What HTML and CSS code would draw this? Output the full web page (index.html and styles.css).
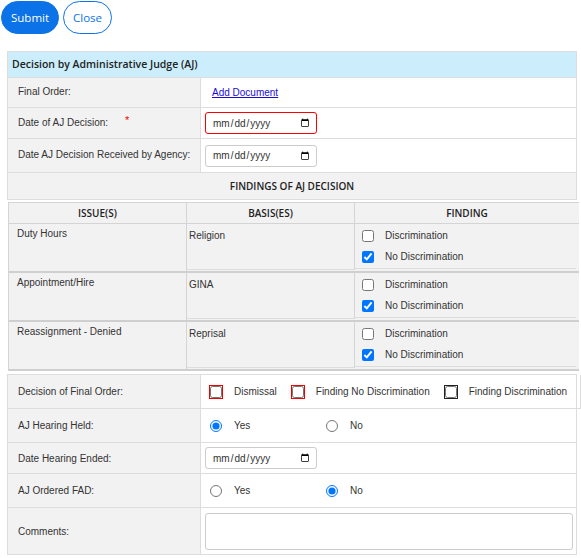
FILE: index.html
```html
<!DOCTYPE html>
<html lang="en">
<head>
  <meta charset="UTF-8">
  <meta name="viewport" content="width=device-width, initial-scale=1.0">
  <title>AJ Decision</title>
  <link rel="stylesheet" href="styles.css">
</head>
<body>

  <div class="toolbar">
    <button class="btn btn-primary">Submit</button>
    <button class="btn btn-outline">Close</button>
  </div>

  <div class="panel">
    <div class="panel-title">Decision by Administrative Judge (AJ)</div>

    <div class="form-row row-final">
      <div class="label">Final Order:</div>
      <div class="value"><a href="#" class="doc-link">Add Document</a></div>
    </div>
    <div class="form-row row-date">
      <div class="label">Date of AJ Decision: <span class="required">*</span></div>
      <div class="value"><input type="date" class="date-input invalid"></div>
    </div>
    <div class="form-row row-received">
      <div class="label">Date AJ Decision Received by Agency:</div>
      <div class="value"><input type="date" class="date-input"></div>
    </div>

    <div class="subhead">FINDINGS OF AJ DECISION</div>
  </div>

  <div class="findings">
    <div class="findings-head">
      <div>ISSUE(S)</div>
      <div>BASIS(ES)</div>
      <div>FINDING</div>
    </div>

    <div class="finding-row">
      <div class="issue">Duty Hours</div>
      <div class="basis">Religion</div>
      <div class="finding">
        <label class="option"><input type="checkbox"> Discrimination</label>
        <label class="option"><input type="checkbox" checked> No Discrimination</label>
      </div>
    </div>
    <div class="finding-row">
      <div class="issue">Appointment/Hire</div>
      <div class="basis">GINA</div>
      <div class="finding">
        <label class="option"><input type="checkbox"> Discrimination</label>
        <label class="option"><input type="checkbox" checked> No Discrimination</label>
      </div>
    </div>
    <div class="finding-row">
      <div class="issue">Reassignment - Denied</div>
      <div class="basis">Reprisal</div>
      <div class="finding">
        <label class="option"><input type="checkbox"> Discrimination</label>
        <label class="option"><input type="checkbox" checked> No Discrimination</label>
      </div>
    </div>
  </div>

  <div class="panel lower">
    <div class="form-row row-order">
      <div class="label">Decision of Final Order:</div>
      <div class="value choices">
        <label class="choice"><input type="checkbox" class="flag"> Dismissal</label>
        <label class="choice"><input type="checkbox" class="flag"> Finding No Discrimination</label>
        <label class="choice"><input type="checkbox" class="flag dark"> Finding Discrimination</label>
      </div>
    </div>
    <div class="form-row row-radio">
      <div class="label">AJ Hearing Held:</div>
      <div class="value choices">
        <label class="radio"><input type="radio" name="held" checked> Yes</label>
        <label class="radio"><input type="radio" name="held"> No</label>
      </div>
    </div>
    <div class="form-row row-ended">
      <div class="label">Date Hearing Ended:</div>
      <div class="value"><input type="date" class="date-input"></div>
    </div>
    <div class="form-row row-radio">
      <div class="label">AJ Ordered FAD:</div>
      <div class="value choices">
        <label class="radio"><input type="radio" name="fad"> Yes</label>
        <label class="radio"><input type="radio" name="fad" checked> No</label>
      </div>
    </div>
    <div class="form-row row-comments">
      <div class="label">Comments:</div>
      <div class="value"><textarea class="comments"></textarea></div>
    </div>
  </div>

</body>
</html>
```

FILE: styles.css
```css
body {
  font-family: "Liberation Sans", Arial, sans-serif;
  font-size: 10px;
  color: #333;
  margin: 0;
  padding: 0;
  background-color: #fff;
}

/* top buttons */
.toolbar {
  display: flex;
  gap: 4px;
  padding: 1px 0 0 1px;
  height: 34px;
}

.btn {
  font-family: "Open Sans", sans-serif;
  font-size: 11.5px;
  height: 33px;
  border-radius: 17px;
  padding: 0 9px;
  cursor: pointer;
}

.btn-primary {
  background-color: #0b72e7;
  border: 1px solid #0b72e7;
  color: #fff;
}

.btn-outline {
  background-color: #fff;
  border: 1px solid #0b72e7;
  color: #0b72e7;
}

/* panels */
.panel {
  margin: 16px 0 0 7px;
  width: 570px;
  box-sizing: border-box;
  border: 1px solid #ddd;
  border-bottom: none;
}

.panel-title {
  height: 25px;
  line-height: 25px;
  padding-left: 4px;
  background-color: #cceefc;
  border-bottom: 1px solid #ddd;
  font-family: "Open Sans", sans-serif;
  font-weight: 600;
  font-size: 10.5px;
  color: #222;
}

.form-row {
  display: grid;
  grid-template-columns: 193px 1fr;
  border-bottom: 1px solid #ddd;
}

.form-row .label {
  background-color: #f2f2f2;
  border-right: 1px solid #ddd;
  padding-left: 10px;
  display: flex;
  align-items: center;
}

.form-row .value {
  display: flex;
  align-items: center;
  padding-left: 4px;
}

.row-final { height: 29px; }
.row-date { height: 30px; }
.row-received { height: 33px; }
.row-order { height: 33px; }
.row-radio { height: 33px; }
.row-ended { height: 30px; }
.row-comments { height: 46px; }

.row-final .label,
.row-date .label,
.row-received .label {
  padding-bottom: 2px;
}

.required {
  color: #e00;
  margin-left: 17px;
  margin-top: -4px;
  font-size: 11px;
}

.doc-link {
  color: #1a0dd8;
  margin-left: 7px;
}

.date-input {
  width: 112px;
  height: 22px;
  box-sizing: border-box;
  border: 1px solid #ccc;
  border-radius: 3px;
  padding: 0 4px 0 6px;
  font-family: "Liberation Sans", Arial, sans-serif;
  font-size: 10px;
  color: #333;
}

.date-input.invalid {
  border: 1px solid #f00;
}

.subhead {
  height: 26px;
  line-height: 26px;
  background-color: #f2f2f2;
  border-bottom: 1px solid #ddd;
  text-align: center;
  font-family: "Open Sans", sans-serif;
  font-weight: 600;
  font-size: 10px;
  color: #222;
}

/* findings table */
.findings {
  margin: 2px 0 0 8px;
  width: 570px;
  background-color: #f2f2f2;
  border-top: 1px solid #d4d4d4;
  border-left: 1px solid #d4d4d4;
}

.findings-head,
.finding-row {
  display: grid;
  grid-template-columns: 178px 168px 1fr;
}

.findings-head {
  height: 20px;
  border-bottom: 1px solid #d4d4d4;
}

.findings-head div {
  line-height: 20px;
  text-align: center;
  border-right: 1px solid #d4d4d4;
  font-family: "Open Sans", sans-serif;
  font-weight: 600;
  font-size: 10px;
  color: #222;
}

.findings-head div:last-child {
  border-right: none;
}

.finding-row {
  height: 47px;
  border-bottom: 2px solid #cfcfcf;
}

.finding-row .issue {
  padding: 4px 0 0 8px;
  line-height: 12px;
  border-right: 1px solid #d4d4d4;
}

.finding-row .basis {
  padding: 6px 0 0 2px;
  line-height: 12px;
  border-right: 1px solid #d4d4d4;
  border-bottom: 1px solid #ddd;
  margin-bottom: 1px;
}

.finding-row .finding {
  padding: 1px 0 0 7px;
  border-bottom: 1px solid #ddd;
  margin: 0 3px 2px 0;
}

.option {
  display: flex;
  align-items: center;
  gap: 11px;
  height: 21px;
}

input[type="checkbox"],
input[type="radio"] {
  width: 12px;
  height: 12px;
  margin: 0;
  flex-shrink: 0;
}

/* lower section */
.lower {
  margin-top: 3px;
}

.lower .row-order {
  width: 572px;
  border-right: 1px solid #ddd;
}

.choices {
  white-space: nowrap;
}

.choice {
  display: flex;
  align-items: center;
  gap: 12px;
  margin-right: 15px;
  flex-shrink: 0;
}

.choice:first-child {
  margin-left: 5px;
}

.flag {
  outline: 1px solid #e00;
  outline-offset: 0;
}

.flag.dark {
  outline-color: #222;
}

.radio {
  display: flex;
  align-items: center;
  gap: 12px;
  width: 116px;
}

.radio:first-child {
  margin-left: 5px;
}

.comments {
  width: 368px;
  height: 37px;
  box-sizing: border-box;
  border: 1px solid #ccc;
  border-radius: 3px;
  resize: none;
}
```
